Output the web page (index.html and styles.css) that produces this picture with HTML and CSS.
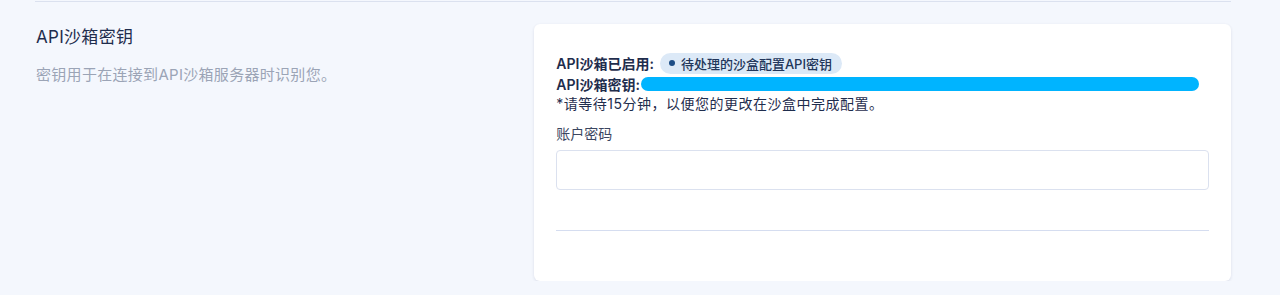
FILE: index.html
```html
<!DOCTYPE html>
<html lang="zh">
<head>
    <meta charset="UTF-8">
    <meta name="viewport" content="width=device-width, initial-scale=1.0">
    <title>API沙箱密钥</title>
    <link rel="stylesheet" href="styles.css">
</head>
<body>
    <div class="page">
        <hr class="divider">

        <section class="settings-row">
            <div class="settings-info">
                <h3>API沙箱密钥</h3>
                <p>密钥用于在连接到API沙箱服务器时识别您。</p>
            </div>

            <div class="card">
                <div class="status-line">
                    <strong>API沙箱已启用:</strong>
                    <span class="badge"><span class="dot"></span>待处理的沙盒配置API密钥</span>
                </div>
                <div class="key-line">
                    <strong>API沙箱密钥:</strong><span class="redacted"></span>
                </div>
                <div class="note">*请等待15分钟，以便您的更改在沙盒中完成配置。</div>

                <label class="field-label" for="password">账户密码</label>
                <input class="field-input" type="password" id="password">

                <hr class="card-divider">
            </div>
        </section>
    </div>
</body>
</html>
```

FILE: styles.css
```css
:root {
    --bg: #f4f7fd;
    --navy: #1f2d4d;
    --muted: #9ba4b6;
    --line: #dbe1ef;
    --badge-bg: #dce9f7;
    --redact: #00b4ff;
}

body {
    margin: 0;
    background: var(--bg);
    font-family: 'Inter', 'Noto Sans CJK SC', sans-serif;
    color: var(--navy);
}

.page {
    width: 1196px;
    margin-left: 35px;
}

.divider {
    margin: 0;
    margin-top: 1px;
    border: none;
    height: 1px;
    background: var(--line);
}

.settings-row {
    display: grid;
    grid-template-columns: 5fr 7fr;
    padding-top: 22px;
}

.settings-info {
    padding-left: 1px;
}

.settings-info h3 {
    margin: 0;
    margin-top: 1px;
    font-size: 17px;
    line-height: 24px;
    font-weight: 400;
    letter-spacing: 0.3px;
}

.settings-info p {
    margin: 16px 0 0;
    font-size: 15px;
    line-height: 20px;
    letter-spacing: 0.3px;
    color: var(--muted);
}

/* 右侧卡片 */
.card {
    background: #fff;
    border-radius: 6px;
    box-shadow: 0 1px 3px rgba(30, 45, 90, 0.12);
    padding: 28px 22px 50px;
    margin-left: 1px;
    font-size: 14px;
}

.status-line {
    display: flex;
    align-items: center;
    height: 22px;
}

.status-line strong,
.key-line strong {
    font-weight: 600;
}

.badge {
    display: inline-flex;
    align-items: center;
    gap: 6px;
    margin-left: 6px;
    padding: 0 10px 0 9px;
    height: 21px;
    border-radius: 11px;
    background: var(--badge-bg);
    color: #22365a;
    font-weight: 500;
    font-size: 13px;
}

.dot {
    width: 6px;
    height: 6px;
    border-radius: 50%;
    background: #1c4d86;
}

.key-line {
    display: flex;
    align-items: center;
    height: 20px;
}

.redacted {
    display: inline-block;
    width: 558px;
    height: 14px;
    border-radius: 7px;
    background: var(--redact);
    margin-left: 1px;
}

.note {
    line-height: 20px;
    letter-spacing: 0.5px;
}

.field-label {
    display: block;
    margin-top: 10px;
    line-height: 20px;
    color: #3b4660;
}

.field-input {
    display: block;
    box-sizing: border-box;
    width: 100%;
    height: 40px;
    margin-top: 6px;
    border: 1px solid var(--line);
    border-radius: 4px;
    background: #fff;
}

.card-divider {
    margin: 40px 0 0;
    border: none;
    height: 1px;
    background: #d5ddf0;
}
```
